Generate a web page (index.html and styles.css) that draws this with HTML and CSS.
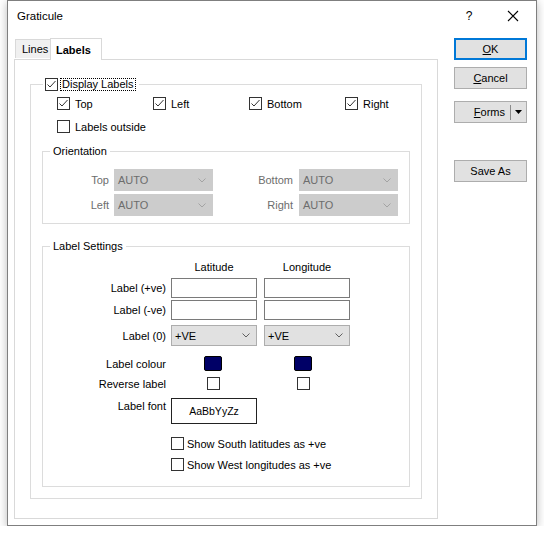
FILE: index.html
```html
<!DOCTYPE html>
<html lang="en">
<head>
  <meta charset="UTF-8">
  <title>Graticule</title>
  <link rel="stylesheet" href="styles.css">
</head>
<body>
  <div class="dialog">
    <div class="titlebar">
      <span class="title">Graticule</span>
      <span class="help">?</span>
      <span class="close">
        <svg width="12" height="12" viewBox="0 0 12 12"><path d="M1 1 L11 11 M11 1 L1 11" stroke="#000" stroke-width="1.1" fill="none"/></svg>
      </span>
    </div>

    <div class="main">
      <div class="tabctl">
        <div class="tabs">
          <div class="tab">Lines</div>
          <div class="tab active">Labels</div>
        </div>

        <div class="pane">
          <fieldset class="group outer">
            <legend class="legend-check">
              <span class="cb"><svg viewBox="0 0 11 11"><path d="M1.5 5.5 L4 8 L9.5 2"/></svg></span>
              <span class="focus">Display Labels</span>
            </legend>

            <div class="sides">
              <label class="check"><span class="cb"><svg viewBox="0 0 11 11"><path d="M1.5 5.5 L4 8 L9.5 2"/></svg></span>Top</label>
              <label class="check"><span class="cb"><svg viewBox="0 0 11 11"><path d="M1.5 5.5 L4 8 L9.5 2"/></svg></span>Left</label>
              <label class="check"><span class="cb"><svg viewBox="0 0 11 11"><path d="M1.5 5.5 L4 8 L9.5 2"/></svg></span>Bottom</label>
              <label class="check"><span class="cb"><svg viewBox="0 0 11 11"><path d="M1.5 5.5 L4 8 L9.5 2"/></svg></span>Right</label>
              <label class="check"><span class="cb"></span>Labels outside</label>
            </div>

            <fieldset class="group orient">
              <legend>Orientation</legend>
              <div class="orient-grid">
                <span class="lbl dim">Top</span>
                <div class="select disabled"><span>AUTO</span><svg width="8" height="5" viewBox="0 0 8 5"><path d="M0.5 0.5 L4 4 L7.5 0.5"/></svg></div>
                <span class="lbl dim">Bottom</span>
                <div class="select disabled"><span>AUTO</span><svg width="8" height="5" viewBox="0 0 8 5"><path d="M0.5 0.5 L4 4 L7.5 0.5"/></svg></div>
                <span class="lbl dim">Left</span>
                <div class="select disabled"><span>AUTO</span><svg width="8" height="5" viewBox="0 0 8 5"><path d="M0.5 0.5 L4 4 L7.5 0.5"/></svg></div>
                <span class="lbl dim">Right</span>
                <div class="select disabled"><span>AUTO</span><svg width="8" height="5" viewBox="0 0 8 5"><path d="M0.5 0.5 L4 4 L7.5 0.5"/></svg></div>
              </div>
            </fieldset>

            <fieldset class="group settings">
              <legend>Label Settings</legend>

              <div class="ls-row head">
                <span></span>
                <span class="colhead">Latitude</span>
                <span class="colhead">Longitude</span>
              </div>

              <div class="ls-row r-pos">
                <span class="lbl">Label (+ve)</span>
                <div class="input"></div>
                <div class="input"></div>
              </div>

              <div class="ls-row r-neg">
                <span class="lbl">Label (-ve)</span>
                <div class="input"></div>
                <div class="input"></div>
              </div>

              <div class="ls-row r-zero">
                <span class="lbl">Label (0)</span>
                <div class="select"><span>+VE</span><svg width="8" height="5" viewBox="0 0 8 5"><path d="M0.5 0.5 L4 4 L7.5 0.5"/></svg></div>
                <div class="select"><span>+VE</span><svg width="8" height="5" viewBox="0 0 8 5"><path d="M0.5 0.5 L4 4 L7.5 0.5"/></svg></div>
              </div>

              <div class="ls-row r-colour">
                <span class="lbl">Label colour</span>
                <div><span class="swatch lat"></span></div>
                <div><span class="swatch lon"></span></div>
              </div>

              <div class="ls-row r-reverse">
                <span class="lbl">Reverse label</span>
                <div><span class="cb lat"></span></div>
                <div><span class="cb lon"></span></div>
              </div>

              <div class="ls-row r-font">
                <span class="lbl top">Label font</span>
                <div class="fontbox">AaBbYyZz</div>
              </div>

              <div class="ls-row r-south">
                <span></span>
                <label class="check wide"><span class="cb"></span>Show South latitudes as +ve</label>
              </div>

              <div class="ls-row r-west">
                <span></span>
                <label class="check wide"><span class="cb"></span>Show West longitudes as +ve</label>
              </div>
            </fieldset>
          </fieldset>
        </div>
      </div>

      <div class="buttons">
        <div class="btn default"><span><u>O</u>K</span></div>
        <div class="btn cancel"><span><u>C</u>ancel</span></div>
        <div class="btn forms">
          <span><u>F</u>orms</span>
          <span class="sep"></span>
          <svg width="7" height="4" viewBox="0 0 7 4"><path d="M0 0 L7 0 L3.5 4 Z" fill="#000"/></svg>
        </div>
        <div class="btn saveas"><span>Save As</span></div>
      </div>
    </div>
  </div>
</body>
</html>
```

FILE: styles.css
```css
body {
  margin: 0;
  background-color: #fff;
  font-family: "Liberation Sans", Arial, sans-serif;
  font-size: 11px;
  color: #000;
}

.dialog {
  width: 530px;
  height: 526px;
  box-sizing: border-box;
  margin-left: 7px;
  border: 1px solid #7f7f7f;
  background-color: #fff;
  box-shadow: 0 2px 9px rgba(0, 0, 0, 0.28);
}

/* title bar */
.titlebar {
  display: flex;
  align-items: center;
  height: 30px;
}

.title {
  padding-left: 9px;
  font-size: 11.5px;
}

.help {
  margin-left: auto;
  width: 46px;
  padding-left: 4px;
  box-sizing: border-box;
  text-align: center;
  font-size: 12px;
}

.close {
  display: flex;
  justify-content: center;
  align-items: center;
  width: 46px;
}

/* body */
.main {
  display: flex;
  padding: 7px 0 0 6px;
}

.tabctl {
  width: 424px;
}

.tabs {
  display: flex;
  align-items: flex-end;
  height: 21px;
}

.tab {
  display: flex;
  align-items: center;
  box-sizing: border-box;
  height: 19px;
  width: 35px;
  margin-left: 1px;
  margin-bottom: 1px;
  padding-left: 6px;
  border: 1px solid #d9d9d9;
  border-right: none;
  border-bottom: none;
  background-color: #f0f0f0;
}

.tab.active {
  position: relative;
  z-index: 1;
  height: 22px;
  width: 52px;
  margin-left: 0;
  margin-bottom: -1px;
  padding-left: 5px;
  border-right: 1px solid #d9d9d9;
  background-color: #fff;
  font-weight: bold;
}

.pane {
  height: 460px;
  box-sizing: border-box;
  border: 1px solid #d9d9d9;
}

/* group boxes */
.group {
  min-width: 0;
  border: 1px solid #dcdcdc;
}

.group legend {
  line-height: 14px;
  height: 14px;
  padding: 0 3px;
  margin-left: 7px;
}

.outer {
  margin: 17px 15px 0;
  padding: 0 0 11px;
}

.outer .legend-check {
  display: flex;
  align-items: center;
  margin-left: 12px;
  padding: 0 3px 0 2px;
}

.focus {
  margin-left: 2px;
  padding: 0 1px;
  line-height: 11px;
  border: 1px dotted #000;
}

.cb {
  display: inline-block;
  flex: none;
  width: 13px;
  height: 13px;
  box-sizing: border-box;
  border: 1px solid #333;
  background-color: #fff;
}

.cb svg {
  display: block;
  width: 11px;
  height: 11px;
  fill: none;
  stroke: #333;
  stroke-width: 1;
}

.check {
  display: flex;
  align-items: center;
  gap: 5px;
  white-space: nowrap;
}

.sides {
  display: grid;
  grid-template-columns: repeat(4, 96px);
  grid-auto-rows: 23px;
  padding: 1px 0 0 26px;
}

/* orientation */
.orient {
  margin: 6px 11px 0;
  padding: 11px 0 7px;
}

.orient-grid {
  display: grid;
  grid-template-columns: 71px 99px 86px 99px;
  grid-auto-rows: 22px;
  row-gap: 3px;
}

.lbl {
  align-self: center;
  text-align: right;
  padding-right: 5px;
  white-space: nowrap;
}

.orient-grid .lbl:nth-child(3),
.orient-grid .lbl:nth-child(7) {
  padding-right: 6px;
}

.dim {
  color: #6d6d6d;
}

.select {
  display: flex;
  align-items: center;
  justify-content: space-between;
  box-sizing: border-box;
  padding: 0 6px 0 3px;
  border: 1px solid #adadad;
  background-color: #e1e1e1;
}

.select svg {
  fill: none;
  stroke: #606060;
  stroke-width: 1;
}

.select.disabled {
  border-color: #cccccc;
  background-color: #cccccc;
  color: #6d6d6d;
}

.select.disabled svg {
  stroke: #a3a3a3;
}

/* label settings */
.settings {
  margin: 15px 11px 0;
  padding: 6px 0 15px;
}

.ls-row {
  display: grid;
  grid-template-columns: 121px 86px 86px;
  column-gap: 7px;
}

.ls-row .lbl {
  align-self: center;
  margin-right: -7px;
}

.head {
  height: 16px;
  align-items: center;
}

.colhead {
  text-align: center;
}

.r-pos { margin-top: 3px; height: 20px; }
.r-neg { margin-top: 2px; height: 20px; }
.r-zero { margin-top: 5px; height: 21px; }
.r-colour { margin-top: 10px; height: 15px; }
.r-reverse { margin-top: 6px; height: 13px; }
.r-font { margin-top: 8px; height: 26px; }
.r-south { margin-top: 13px; height: 13px; }
.r-west { margin-top: 8px; height: 13px; }

.input {
  box-sizing: border-box;
  border: 1px solid #7a7a7a;
  background-color: #fff;
}

.swatch {
  display: block;
  width: 18px;
  height: 15px;
  box-sizing: border-box;
  border: 1px solid #000;
  border-radius: 2px;
  background-color: #000066;
}

.swatch.lat { margin-left: 33px; }
.swatch.lon { margin-left: 30px; }

.r-reverse .cb { display: block; }
.r-reverse .cb.lat { margin-left: 36px; }
.r-reverse .cb.lon { margin-left: 33px; }

.ls-row .lbl.top {
  align-self: start;
  line-height: 16px;
}

.fontbox {
  display: flex;
  align-items: center;
  justify-content: center;
  box-sizing: border-box;
  border: 1px solid #222;
  font-size: 10.5px;
}

.check.wide {
  grid-column: 2 / span 2;
  gap: 3px;
}

/* buttons */
.buttons {
  display: flex;
  flex-direction: column;
  width: 73px;
  margin-left: 16px;
}

.btn {
  display: flex;
  align-items: center;
  justify-content: center;
  height: 22px;
  box-sizing: border-box;
  border: 1px solid #adadad;
  background-color: #e1e1e1;
}

.btn.default {
  border: 2px solid #0078d7;
}

.btn.cancel { margin-top: 7px; }

.btn.forms {
  margin-top: 12px;
  justify-content: flex-end;
  padding-right: 4px;
}

.sep {
  width: 1px;
  height: 15px;
  margin: 0 4px 0 5px;
  background-color: #8a8a8a;
}

.btn.saveas { margin-top: 37px; }
```
